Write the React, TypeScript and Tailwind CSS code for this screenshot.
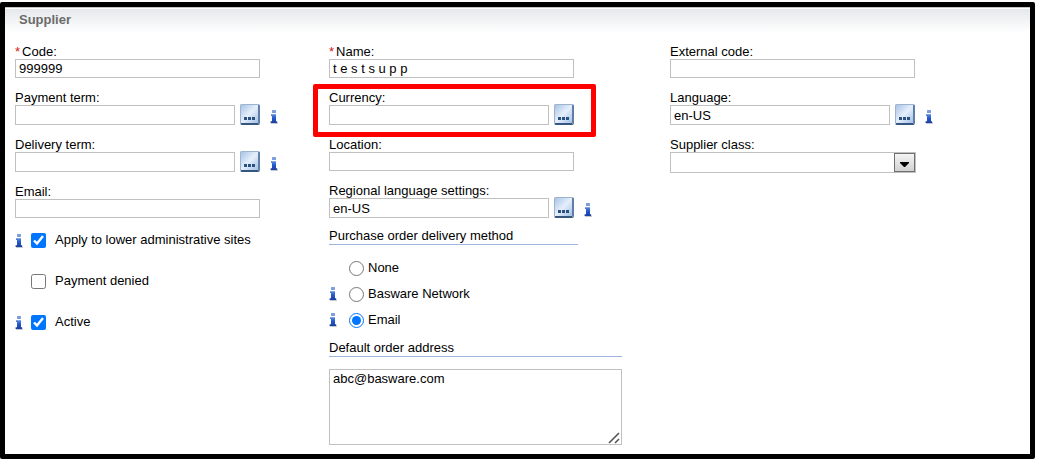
import React, { useId, useState } from "react";

const InfoIcon = () => (
  <svg width="8" height="14" viewBox="0 0 8 14" className="flex-none" aria-hidden="true">
    <defs>
      <linearGradient id="info-blue" x1="0" y1="0" x2="0" y2="1">
        <stop offset="0" stopColor="#5d8ae0" />
        <stop offset="0.45" stopColor="#2459cc" />
        <stop offset="1" stopColor="#1a3f9c" />
      </linearGradient>
    </defs>
    <path d="M1 13.5h7" stroke="#c3c7d2" strokeWidth="1" />
    <rect x="2" y="0" width="4" height="3" rx="0.6" fill="#7f9cdc" />
    <path d="M1 4.2h5v7h1.2V13H0.6v-1.8H2V6H1z" fill="url(#info-blue)" />
  </svg>
);

const LookupButton = ({ label }: { label: string }) => (
  <button
    type="button"
    aria-label={`Select ${label}`}
    className="-mt-px flex h-[21px] w-5 flex-none cursor-pointer items-end justify-center rounded-xs border border-r-2 border-b-2 border-t-[#9db4d0] border-r-[#5f7fa6] border-b-[#34567f] border-l-[#9db4d0] bg-linear-to-br from-[#a9c4e6] via-[#e6effb] to-[#a3c0e6] pb-[3px]"
  >
    <svg width="11" height="3" viewBox="0 0 11 3" aria-hidden="true">
      <path d="M0 0h3v3H0zM4 0h3v3H4zM8 0h3v3H8z" fill="#2c5180" />
    </svg>
  </button>
);

type FieldProps = {
  label: string;
  value?: string;
  required?: boolean;
  lookup?: boolean;
  info?: boolean;
  highlight?: boolean;
};

const Field = ({ label, value = "", required, lookup, info, highlight }: FieldProps) => {
  const id = useId();
  const [text, setText] = useState(value);
  return (
    <div className="relative">
      {highlight && (
        <div className="pointer-events-none absolute -top-[5px] -bottom-[12px] -left-4 w-[283px] rounded-xs border-5 border-[#ff0000]" />
      )}
      <label htmlFor={id} className="block h-4 leading-[18px]">
        {required && <span className="mr-[2px] text-[#d02010]">*</span>}
        {label}:
      </label>
      <div className="flex items-center">
        <div className="flex w-[245px] gap-[5px]">
          <input
            id={id}
            type="text"
            value={text}
            onChange={(e) => setText(e.target.value)}
            className={`min-w-0 flex-1 border border-[#c0c0c0] bg-white px-[3px] outline-none ${lookup ? "h-5" : "h-[19px]"}`}
          />
          {lookup && <LookupButton label={label} />}
        </div>
        {info && (
          <span className="ml-[10px] pt-1">
            <InfoIcon />
          </span>
        )}
      </div>
    </div>
  );
};

const SelectField = ({ label }: { label: string }) => {
  const id = useId();
  return (
    <div>
      <label htmlFor={id} className="block h-4 leading-[18px]">
        {label}:
      </label>
      <div className="relative w-[246px]">
        <select
          id={id}
          className="block h-[21px] w-full appearance-none border border-[#c0c0c0] bg-white px-[3px] outline-none"
        >
          <option></option>
        </select>
        <span className="pointer-events-none absolute top-px right-px flex h-[19px] w-[21px] items-center justify-center border border-[#707070] bg-linear-to-b from-[#f4f4f4] to-[#d2d2d2] pt-1">
          <svg width="9" height="5" viewBox="0 0 9 5" aria-hidden="true">
            <path d="M0 0h9v1L5 5H4L0 1z" fill="#000" />
          </svg>
        </span>
      </div>
    </div>
  );
};

const CheckRow = ({ label, info, checked }: { label: string; info?: boolean; checked?: boolean }) => (
  <div className="flex h-4 items-center">
    <span className="w-4 flex-none pt-[2px]">{info && <InfoIcon />}</span>
    <label className="flex items-center gap-[9px] leading-4">
      <input type="checkbox" defaultChecked={checked} className="h-[15px] w-[15px]" />
      {label}
    </label>
  </div>
);

const RadioRow = ({ label, info, checked }: { label: string; info?: boolean; checked?: boolean }) => (
  <div className="flex items-center">
    <span className="w-5 flex-none pt-px">{info && <InfoIcon />}</span>
    <label className="flex items-center gap-1 leading-4">
      <input
        type="radio"
        name="delivery-method"
        defaultChecked={checked}
        className="mt-[2px] h-[15px] w-[15px]"
      />
      {label}
    </label>
  </div>
);

const App = () => {
  return (
    <div className="bg-white pt-[2px] pr-[2px] pb-px font-['Liberation_Sans',Arial,sans-serif] text-[13px] text-black">
      <form className="rounded-xs border-5 border-black">
        <div className="border-t border-[#c4c4c4] pt-px">
          <header className="h-6 bg-linear-to-b from-[#e6e9ec] to-white pl-[14px]">
            <h1 className="text-[13px] leading-[22px] font-bold text-[#6b6b6b]">Supplier</h1>
          </header>
        </div>

        <div className="grid grid-cols-[314fr_341fr_360fr] pt-[10px] pb-[9px] pl-[10px]">
          <div>
            <div className="flex flex-col gap-[11px]">
              <Field label="Code" value="999999" required />
              <Field label="Payment term" lookup info />
              <Field label="Delivery term" lookup info />
              <Field label="Email" />
            </div>
            <div className="mt-[14px] flex flex-col gap-[25px]">
              <CheckRow label="Apply to lower administrative sites" info checked />
              <CheckRow label="Payment denied" />
              <CheckRow label="Active" info checked />
            </div>
          </div>

          <div>
            <div className="flex flex-col gap-[11px]">
              <Field label="Name" value="t e s t s u p p" required />
              <Field label="Currency" lookup highlight />
              <Field label="Location" />
              <Field label="Regional language settings" value="en-US" lookup info />
            </div>
            <fieldset className="mt-[10px]">
              <legend className="w-[249px] border-b border-[#9fb4dc] leading-4">
                Purchase order delivery method
              </legend>
              <div className="mt-[14px] flex flex-col gap-[9px]">
                <RadioRow label="None" />
                <RadioRow label="Basware Network" info />
                <RadioRow label="Email" info checked />
              </div>
            </fieldset>
            <label
              htmlFor="order-address"
              className="mt-3 block w-[293px] border-b border-[#9fb4dc] leading-4"
            >
              Default order address
            </label>
            <div className="relative mt-3 w-[293px]">
              <textarea
                id="order-address"
                defaultValue="abc@basware.com"
                className="block h-[76px] w-full resize-none border border-[#c0c0c0] px-[3px] py-px leading-4 outline-none"
              />
              <svg
                width="12"
                height="12"
                viewBox="0 0 12 12"
                className="pointer-events-none absolute right-[2px] bottom-[1px]"
                aria-hidden="true"
              >
                <path d="M1 11L11 1M7 11l4-4" stroke="#555" strokeWidth="1.6" fill="none" />
              </svg>
            </div>
          </div>

          <div className="flex flex-col gap-[11px]">
            <Field label="External code" />
            <Field label="Language" value="en-US" lookup info />
            <SelectField label="Supplier class" />
          </div>
        </div>
      </form>
    </div>
  );
};

export default App;
